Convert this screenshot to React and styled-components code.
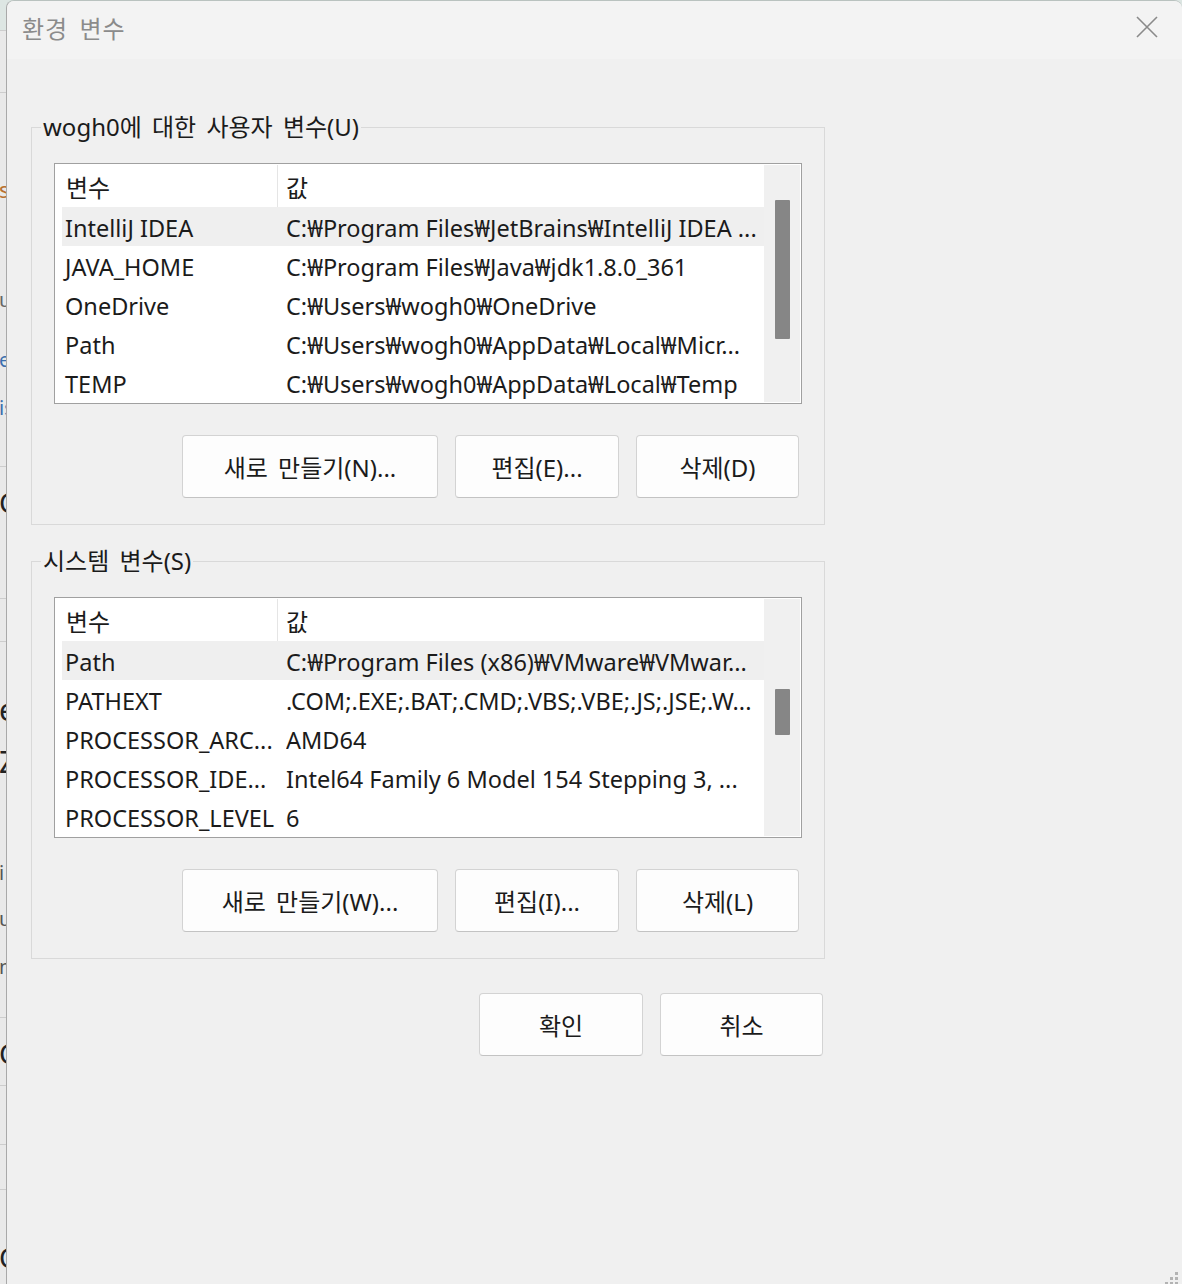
import React from 'react';
import styled, { createGlobalStyle } from 'styled-components';

const GlobalStyle = createGlobalStyle`
  html, body {
    margin: 0;
    padding: 0;
  }
  body {
    background: #e9e9e9;
    font-family: "Noto Sans", "Noto Sans CJK KR", sans-serif;
    color: #1b1b1b;
  }
`;

const Page = styled.div`
  display: flex;
  width: 1182px;
  height: 1284px;
  overflow: hidden;
  background: linear-gradient(#dde6e3 0, #dde6e3 31px, #e9e9e9 31px);
`;

//  창 뒤에 살짝 보이는 다른 창의 가장자리
const BackStrip = styled.div`
  width: 6px;
  flex: none;
  display: flex;
  flex-direction: column;
  overflow: hidden;
`;

const BackRow = styled.div`
  height: ${p => p.$h}px;
  flex: none;
  box-sizing: border-box;
  border-bottom: ${p => (p.$line ? '1px solid #cdcdcd' : 'none')};
  display: flex;
  align-items: center;
  font-size: ${p => p.$size || 20}px;
  color: ${p => p.$color || '#333'};
  white-space: nowrap;
  line-height: 1;
  margin-left: -1px;
`;

const Window = styled.div`
  position: relative;
  flex: 1;
  display: flex;
  flex-direction: column;
  background: #f0f0f0;
  border-left: 1px solid #a9a9a9;
  border-top: 1px solid #b9c2bf;
  border-radius: 8px 8px 0 0;
  overflow: hidden;
`;

const TitleBar = styled.div`
  height: 58px;
  flex: none;
  box-sizing: border-box;
  display: flex;
  align-items: center;
  justify-content: space-between;
  padding: 0 23px 6px 15px;
  background: #f3f3f3;
`;

const Title = styled.span`
  font-size: 24px;
  color: #8b8b8b;
  letter-spacing: 1px;
  word-spacing: 4px;
`;

const Content = styled.div`
  flex: 1;
  padding: 54px 0 0 24px;
`;

const Group = styled.fieldset`
  width: 794px;
  min-width: 0;
  box-sizing: border-box;
  margin: 0;
  padding: 22px 22px 26px;
  border: 1px solid #d9d9d9;

  & + & {
    margin-top: 22px;
  }
`;

const Legend = styled.legend`
  margin-left: -13px;
  padding: 0 2px;
  font-size: 24px;
  line-height: 28px;
  word-spacing: 4px;
  color: #1b1b1b;
`;

const ListBox = styled.div`
  height: 241px;
  box-sizing: border-box;
  border: 1px solid #a0a0a0;
  background: #ffffff;
  padding: 1px;
  display: flex;
`;

const Table = styled.div`
  flex: 1;
  min-width: 0;
  display: flex;
  flex-direction: column;
`;

const HeaderRow = styled.div`
  display: flex;
  height: 42px;
  flex: none;
`;

const HeaderCell = styled.div`
  box-sizing: border-box;
  width: ${p => (p.$w ? `${p.$w}px` : 'auto')};
  flex: ${p => (p.$w ? 'none' : '1')};
  padding: 3px 0 0 ${p => p.$pad}px;
  border-right: ${p => (p.$divider ? '1px solid #e5e5e5' : 'none')};
  font-size: 24px;
  line-height: 39px;
`;

const Rows = styled.div`
  margin-left: 6px;
`;

const Row = styled.div`
  display: flex;
  height: 39px;
  box-sizing: border-box;
  padding-top: 4px;
  background: ${p => (p.$selected ? '#efefef' : 'transparent')};
  font-size: 23.5px;
  line-height: 35px;
`;

const NameCell = styled.div`
  width: 224px;
  flex: none;
  box-sizing: border-box;
  padding-left: 3px;
  overflow: hidden;
  white-space: nowrap;
`;

const ValueCell = styled.div`
  flex: 1;
  min-width: 0;
  overflow: hidden;
  white-space: nowrap;
`;

const ScrollTrack = styled.div`
  width: 36px;
  flex: none;
  box-sizing: border-box;
  background: #f0f0f0;
  padding-top: ${p => p.$top}px;
`;

const ScrollThumb = styled.div`
  width: 15px;
  height: ${p => p.$h}px;
  margin-left: 11px;
  background: #868686;
  border-radius: 1px;
`;

const ButtonRow = styled.div`
  display: flex;
  justify-content: flex-end;
  gap: 17px;
  margin-top: 31px;
  padding-right: 3px;
`;

const Button = styled.button`
  width: ${p => p.$w}px;
  height: 63px;
  box-sizing: border-box;
  padding: 0;
  background: #fdfdfd;
  border: 1px solid #d3d3d3;
  border-bottom-color: #c3c3c3;
  border-radius: 4px;
  font-family: inherit;
  font-size: 24px;
  word-spacing: 4px;
  color: #1b1b1b;
`;

const Footer = styled.div`
  width: 794px;
  box-sizing: border-box;
  display: flex;
  justify-content: flex-end;
  gap: 17px;
  margin-top: 34px;
  padding-right: 2px;
`;

const Grip = styled.svg`
  position: absolute;
  right: 2px;
  bottom: -2px;
`;

const backRows = [
  { h: 31, line: true },
  { h: 62, line: true },
  { h: 85 },
  { h: 22, text: 's', color: '#b8702e', size: 22 },
  { h: 85 },
  { h: 30, text: 'u', color: '#666' },
  { h: 30 },
  { h: 30, text: 'e', color: '#3c6fae' },
  { h: 20 },
  { h: 26, text: 'is', color: '#3c6fae' },
  { h: 46, line: true },
  { h: 20 },
  { h: 30, text: 'C', color: '#222', size: 28 },
  { h: 82, line: true },
  { h: 43, line: true },
  { h: 50 },
  { h: 36, text: 'e', color: '#222', size: 30 },
  { h: 16 },
  { h: 36, text: 'Z', color: '#222', size: 30 },
  { h: 78 },
  { h: 30, text: 'i', color: '#555' },
  { h: 16 },
  { h: 30, text: 'u', color: '#555' },
  { h: 18 },
  { h: 30, text: 'n', color: '#555' },
  { h: 36, line: true },
  { h: 20 },
  { h: 30, text: 'C', color: '#222', size: 28 },
  { h: 18, line: true },
  { h: 59, line: true },
  { h: 45, line: true },
  { h: 52 },
  { h: 30, text: 'C', color: '#222', size: 28 },
];

const userVars = [
  { name: 'IntelliJ IDEA', value: 'C:₩Program Files₩JetBrains₩IntelliJ IDEA ...' },
  { name: 'JAVA_HOME', value: 'C:₩Program Files₩Java₩jdk1.8.0_361' },
  { name: 'OneDrive', value: 'C:₩Users₩wogh0₩OneDrive' },
  { name: 'Path', value: 'C:₩Users₩wogh0₩AppData₩Local₩Micr...' },
  { name: 'TEMP', value: 'C:₩Users₩wogh0₩AppData₩Local₩Temp' },
];

const systemVars = [
  { name: 'Path', value: 'C:₩Program Files (x86)₩VMware₩VMwar...' },
  { name: 'PATHEXT', value: '.COM;.EXE;.BAT;.CMD;.VBS;.VBE;.JS;.JSE;.W...' },
  { name: 'PROCESSOR_ARC...', value: 'AMD64' },
  { name: 'PROCESSOR_IDE...', value: 'Intel64 Family 6 Model 154 Stepping 3, ...' },
  { name: 'PROCESSOR_LEVEL', value: '6' },
];

const CloseIcon = () => (
  <svg width="24" height="24" viewBox="0 0 24 24">
    <path d="M2 2 L22 22 M22 2 L2 22" stroke="#8a8a8a" strokeWidth="1.6" fill="none" />
  </svg>
);

function VarList({ rows, thumbTop, thumbHeight }) {
  return (
    <ListBox>
      <Table>
        <HeaderRow>
          <HeaderCell $w={222} $pad={10} $divider>
            변수
          </HeaderCell>
          <HeaderCell $pad={8}>값</HeaderCell>
        </HeaderRow>
        <Rows>
          {rows.map((row, i) => (
            <Row key={row.name} $selected={i === 0}>
              <NameCell>{row.name}</NameCell>
              <ValueCell>{row.value}</ValueCell>
            </Row>
          ))}
        </Rows>
      </Table>
      <ScrollTrack $top={thumbTop}>
        <ScrollThumb $h={thumbHeight} />
      </ScrollTrack>
    </ListBox>
  );
}

function VarGroup({ label, rows, thumbTop, thumbHeight, keys }) {
  return (
    <Group>
      <Legend>{label}</Legend>
      <VarList rows={rows} thumbTop={thumbTop} thumbHeight={thumbHeight} />
      <ButtonRow>
        <Button $w={256}>새로 만들기({keys[0]})...</Button>
        <Button $w={164}>편집({keys[1]})...</Button>
        <Button $w={163}>삭제({keys[2]})</Button>
      </ButtonRow>
    </Group>
  );
}

export default function App() {
  return (
    <>
      <GlobalStyle />
      <Page>
        <BackStrip>
          {backRows.map((r, i) => (
            <BackRow key={i} $h={r.h} $line={r.line} $size={r.size} $color={r.color}>
              {r.text}
            </BackRow>
          ))}
        </BackStrip>
        <Window>
          <TitleBar>
            <Title>환경 변수</Title>
            <CloseIcon />
          </TitleBar>
          <Content>
            <VarGroup
              label="wogh0에 대한 사용자 변수(U)"
              rows={userVars}
              thumbTop={35}
              thumbHeight={139}
              keys={['N', 'E', 'D']}
            />
            <VarGroup
              label="시스템 변수(S)"
              rows={systemVars}
              thumbTop={90}
              thumbHeight={46}
              keys={['W', 'I', 'L']}
            />
            <Footer>
              <Button $w={164}>확인</Button>
              <Button $w={163}>취소</Button>
            </Footer>
          </Content>
          <Grip width="20" height="20" viewBox="0 0 20 20">
            <g fill="#b3b3b3">
              <rect x="15" y="6" width="3" height="3" />
              <rect x="10" y="11" width="3" height="3" />
              <rect x="15" y="11" width="3" height="3" />
              <rect x="5" y="16" width="3" height="3" />
              <rect x="10" y="16" width="3" height="3" />
              <rect x="15" y="16" width="3" height="3" />
            </g>
          </Grip>
        </Window>
      </Page>
    </>
  );
}
